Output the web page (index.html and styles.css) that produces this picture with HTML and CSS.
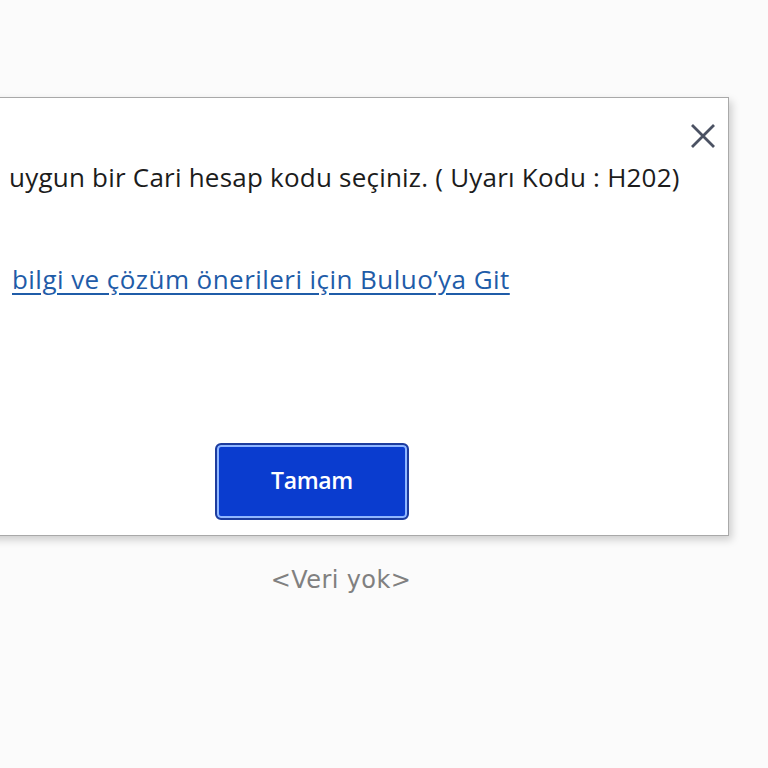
FILE: index.html
```html
<!DOCTYPE html>
<html lang="tr">
<head>
<meta charset="utf-8">
<link rel="stylesheet" href="styles.css">
</head>
<body>
<div class="page">
  <div class="dialog">
    <button class="close" aria-label="Kapat">
      <svg width="26" height="26" viewBox="0 0 26 26"><path d="M2 2 L24 24 M24 2 L2 24" stroke="#4b5263" stroke-width="2.8" fill="none"/></svg>
    </button>
    <p class="message">uygun bir Cari hesap kodu seçiniz. ( Uyarı Kodu : H202)</p>
    <a class="help" href="#">bilgi ve çözüm önerileri için Buluo’ya Git</a>
    <div class="actions">
      <button class="ok">Tamam</button>
    </div>
  </div>
  <div class="empty">&lt;Veri yok&gt;</div>
</div>
</body>
</html>
```
FILE: styles.css
```css
html, body {
  margin: 0;
  background: #fbfbfb;
  font-family: "Open Sans", "Noto Sans", sans-serif;
  overflow: hidden;
}
.page {
  width: 768px;
  height: 768px;
  padding-top: 97px;
  box-sizing: border-box;
}
.dialog {
  position: relative;
  display: flex;
  flex-direction: column;
  align-items: flex-start;
  margin-left: -105px;
  width: 834px;
  height: 439px;
  box-sizing: border-box;
  background: #fff;
  border: 1px solid #a9a9a9;
  box-shadow: 3px 4px 8px rgba(0,0,0,0.18);
  padding: 61px 0 15px 113px;
}
.close {
  position: absolute;
  top: 25px;
  right: 12px;
  border: 0;
  background: none;
  padding: 0;
  width: 26px;
  height: 26px;
}
.message {
  margin: 0;
  font-size: 26px;
  color: #1c1c1c;
  line-height: 36px;
  letter-spacing: 0.22px;
  white-space: nowrap;
}
.help {
  display: block;
  margin-top: 66px;
  margin-left: 3px;
  font-size: 26px;
  line-height: 36px;
  color: #1f5ca8;
  letter-spacing: 0.45px;
  text-decoration: underline;
  text-underline-offset: 4px;
  white-space: nowrap;
}
.actions {
  margin-top: auto;
  align-self: stretch;
  display: flex;
  justify-content: center;
  margin-left: -113px;
}
.ok {
  width: 194px;
  height: 77px;
  border: 2px solid #1d3c9e;
  border-radius: 6px;
  box-shadow: inset 0 0 0 2px #8fb6ff;
  background: #0a3ccf;
  color: #fff;
  font-family: "Open Sans", sans-serif;
  font-size: 23px;
  font-weight: 600;
  letter-spacing: -0.3px;
  padding: 0 0 4px;
}
.empty {
  margin-top: 30px;
  width: 682px;
  text-align: center;
  font-family: "DejaVu Sans", sans-serif;
  font-size: 24px;
  color: #808080;
  letter-spacing: 0.4px;
}
```
